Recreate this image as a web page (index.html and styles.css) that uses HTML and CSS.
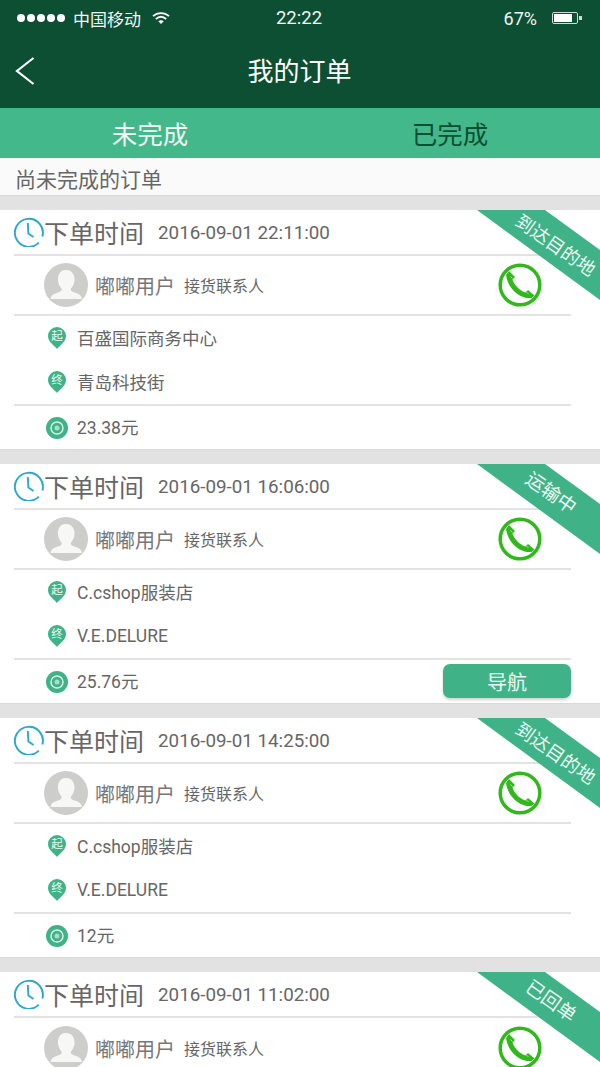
FILE: index.html
```html
<!DOCTYPE html>
<html lang="zh">
<head>
<meta charset="utf-8">
<title>我的订单</title>
<link rel="stylesheet" href="styles.css">
</head>
<body>
<svg class="defs" width="0" height="0" aria-hidden="true">
  <symbol id="clock" viewBox="0 0 30 30"><path d="M24.800 25.700A14 14 0 1 1 28.400 19.500" fill="none" stroke="#2ba8cc" stroke-width="1.900"/><path d="M13.800 6 14.400 16.500 19.500 20" fill="none" stroke="#2ba8cc" stroke-width="1.900"/></symbol>
  <symbol id="person" viewBox="0 0 44 44"><circle cx="22" cy="22" r="22" fill="#cdcdcb"/><path d="M22 7c6 0 9 5 8.500 10.500-.3 3.500-1.800 6-3.500 8-1 1.500.5 3 3.500 4 4 1.300 7 2.500 7.500 6.500H6.500c.5-4 3.500-5.200 7.500-6.500 3-1 4.500-2.500 3.500-4-1.700-2-3.200-4.500-3.500-8C13.500 12 16 7 22 7Z" fill="#f7f7f5"/></symbol>
  <symbol id="phone" viewBox="0 0 44 44"><circle cx="22" cy="22" r="19.800" fill="#fff" stroke="#31b81c" stroke-width="3.500"/><path d="M11 8l6 6-2.500 2.500c1 3 2.500 5.500 5 8s5 4 8 5l2.500-2.500 6.500 5.500-3 2.500C22 36 10 26 8 12Z" fill="#31b81c"/><path d="M12.500 13.500l2 2M28.500 29l2 2" stroke="#a8e29e" stroke-width="1"/></symbol>
  <symbol id="coin" viewBox="0 0 22 22"><circle cx="11" cy="11" r="11" fill="#3fb387"/><circle cx="11" cy="11" r="6" fill="none" stroke="#d8f2e6" stroke-width="1.500"/><circle cx="11" cy="11" r="2.500" fill="#a9dfc6"/></symbol>
</svg>
<div class="screen">
  <header class="top">
    <div class="status">
      <div class="carrier">
        <span class="dots"><i></i><i></i><i></i><i></i><i></i></span>
        <span>中国移动</span>
        <svg class="wifi" width="18" height="14" viewBox="0 0 18 14"><path d="M1 5.200C5.500 1 12.500 1 17 5.200M3.800 8C7 5.200 11 5.200 14.200 8" fill="none" stroke="#fff" stroke-width="1.800"/><path d="M6.300 10.300 9 13l2.700-2.700C10 9 8 9 6.300 10.300Z" fill="#fff"/></svg>
      </div>
      <div class="clock-text">22:22</div>
      <div class="power">
        <span>67%</span>
        <span class="battery"><span class="charge"></span></span>
      </div>
    </div>
    <div class="nav">
      <svg class="back" width="20" height="28" viewBox="0 0 20 28"><path d="M18.500 1 2 14l16.500 13" fill="none" stroke="#fff" stroke-width="2.200"/></svg>
      <h1>我的订单</h1>
    </div>
  </header>
  <div class="tabs">
    <div class="tab active">未完成</div>
    <div class="tab">已完成</div>
  </div>
  <div class="sub">尚未完成的订单</div>

  <section class="card">
    <div class="ribbon"><span>到达目的地</span></div>
    <div class="row time"><svg class="i-clock"><use href="#clock"/></svg><span class="tlabel">下单时间</span><span class="tvalue">2016-09-01 22:11:00</span></div>
    <div class="row user"><svg class="i-person"><use href="#person"/></svg><span class="name">嘟嘟用户</span><span class="role">接货联系人</span><svg class="i-phone"><use href="#phone"/></svg></div>
    <div class="row route">
      <div class="place"><svg class="pin" viewBox="0 0 18 22"><path d="M9 22C6 18 0 15 0 9a9 9 0 0 1 18 0c0 6-6 9-9 13Z" fill="#3fb387"/><text x="9" y="13" text-anchor="middle">起</text></svg><span>百盛国际商务中心</span></div>
      <div class="place"><svg class="pin" viewBox="0 0 18 22"><path d="M9 22C6 18 0 15 0 9a9 9 0 0 1 18 0c0 6-6 9-9 13Z" fill="#3fb387"/><text x="9" y="13" text-anchor="middle">终</text></svg><span>青岛科技街</span></div>
    </div>
    <div class="row price"><svg class="i-coin"><use href="#coin"/></svg><span class="amount">23.38元</span></div>
  </section>

  <section class="card">
    <div class="ribbon short"><span>运输中</span></div>
    <div class="row time"><svg class="i-clock"><use href="#clock"/></svg><span class="tlabel">下单时间</span><span class="tvalue">2016-09-01 16:06:00</span></div>
    <div class="row user"><svg class="i-person"><use href="#person"/></svg><span class="name">嘟嘟用户</span><span class="role">接货联系人</span><svg class="i-phone"><use href="#phone"/></svg></div>
    <div class="row route">
      <div class="place"><svg class="pin" viewBox="0 0 18 22"><path d="M9 22C6 18 0 15 0 9a9 9 0 0 1 18 0c0 6-6 9-9 13Z" fill="#3fb387"/><text x="9" y="13" text-anchor="middle">起</text></svg><span>C.cshop服装店</span></div>
      <div class="place"><svg class="pin" viewBox="0 0 18 22"><path d="M9 22C6 18 0 15 0 9a9 9 0 0 1 18 0c0 6-6 9-9 13Z" fill="#3fb387"/><text x="9" y="13" text-anchor="middle">终</text></svg><span>V.E.DELURE</span></div>
    </div>
    <div class="row price"><svg class="i-coin"><use href="#coin"/></svg><span class="amount">25.76元</span><button class="go">导航</button></div>
  </section>

  <section class="card">
    <div class="ribbon"><span>到达目的地</span></div>
    <div class="row time"><svg class="i-clock"><use href="#clock"/></svg><span class="tlabel">下单时间</span><span class="tvalue">2016-09-01 14:25:00</span></div>
    <div class="row user"><svg class="i-person"><use href="#person"/></svg><span class="name">嘟嘟用户</span><span class="role">接货联系人</span><svg class="i-phone"><use href="#phone"/></svg></div>
    <div class="row route">
      <div class="place"><svg class="pin" viewBox="0 0 18 22"><path d="M9 22C6 18 0 15 0 9a9 9 0 0 1 18 0c0 6-6 9-9 13Z" fill="#3fb387"/><text x="9" y="13" text-anchor="middle">起</text></svg><span>C.cshop服装店</span></div>
      <div class="place"><svg class="pin" viewBox="0 0 18 22"><path d="M9 22C6 18 0 15 0 9a9 9 0 0 1 18 0c0 6-6 9-9 13Z" fill="#3fb387"/><text x="9" y="13" text-anchor="middle">终</text></svg><span>V.E.DELURE</span></div>
    </div>
    <div class="row price"><svg class="i-coin"><use href="#coin"/></svg><span class="amount">12元</span></div>
  </section>

  <section class="card">
    <div class="ribbon short"><span>已回单</span></div>
    <div class="row time"><svg class="i-clock"><use href="#clock"/></svg><span class="tlabel">下单时间</span><span class="tvalue">2016-09-01 11:02:00</span></div>
    <div class="row user"><svg class="i-person"><use href="#person"/></svg><span class="name">嘟嘟用户</span><span class="role">接货联系人</span><svg class="i-phone"><use href="#phone"/></svg></div>
  </section>
</div>
</body>
</html>
```

FILE: styles.css
```css
* { box-sizing: border-box; }
html, body { margin: 0; padding: 0; }
body {
  width: 600px;
  height: 1067px;
  overflow: hidden;
  background: #e2e2e2;
  font-family: Roboto, "Noto Sans CJK SC", sans-serif;
  color: #666;
}
.defs { position: absolute; }
.screen { display: flex; flex-direction: column; height: 1067px; overflow: hidden; }

.top { height: 108px; flex: none; background: #0c4f32; color: #fff; }
.status {
  height: 36px;
  padding: 0 22px 0 17px;
  display: grid;
  grid-template-columns: 1fr auto 1fr;
  align-items: center;
  font-size: 17px;
  color: #f2f7f4;
}
.carrier { display: flex; align-items: center; gap: 8px; }
.dots { display: flex; gap: 2px; }
.dots i { width: 8px; height: 8px; border-radius: 50%; background: #fff; }
.wifi { margin-left: 3px; }
.clock-text { font-size: 18.500px; margin-left: 3px; }
.power { display: flex; align-items: center; justify-content: flex-end; gap: 15px; font-size: 18px; }
.battery {
  position: relative;
  width: 26px;
  height: 12px;
  border: 1px solid #cfdcd5;
  border-radius: 2px;
  padding: 1px;
  display: flex;
}
.battery::after {
  content: "";
  position: absolute;
  right: -5px;
  top: 3px;
  width: 3px;
  height: 4px;
  background: #cfdcd5;
}
.charge { width: 18px; background: #fff; }
.nav {
  height: 72px;
  position: relative;
  display: flex;
  align-items: center;
  justify-content: center;
}
.nav h1 { margin: 0 0 0 -1px; font-size: 26px; font-weight: 400; line-height: 1; color: #fff; }
.back { position: absolute; left: 15px; top: 21px; }

.tabs { height: 50px; flex: none; background: #43b88a; display: flex; }
.tab { flex: 1; display: flex; align-items: center; justify-content: center; padding-bottom: 2px; font-size: 25.500px; color: #0c4f32; }
.tab.active { color: #f2fbf6; }

.sub {
  height: 38px;
  flex: none;
  background: #fafafa;
  border-bottom: 1px solid #d9d9d9;
  padding: 3px 0 0 15px;
  display: flex;
  align-items: center;
  font-size: 21px;
  color: #666;
}

.card {
  position: relative;
  flex: none;
  overflow: hidden;
  background: #fff;
  margin-top: 14px;
  height: 240px;
  padding: 0 29px 0 14px;
  border-bottom: 1px solid #d9d9d9;
}
.row { display: flex; align-items: center; border-bottom: 2px solid #e2e2e2; }
.row:last-child { border-bottom: 0; }

.time { height: 46px; }
.i-clock { width: 30px; height: 30px; flex: none; }
.tlabel { font-size: 25px; color: #666; margin-right: 14px; }
.tvalue { font-size: 18.800px; color: #666; margin-top: 2px; }

.user { height: 60px; padding-left: 30px; }
.i-person { width: 44px; height: 44px; flex: none; margin-right: 7px; }
.name { font-size: 20px; color: #777; margin-right: 9px; }
.role { font-size: 16px; color: #666; }
.i-phone { width: 44px; height: 44px; margin-left: auto; margin-right: 29px; flex: none; }

.route { height: 90px; padding-left: 34px; flex-direction: column; align-items: flex-start; gap: 1px; }
.place { height: 43px; display: flex; align-items: center; font-size: 17.500px; color: #666; }
.pin { width: 18px; height: 22px; flex: none; margin-right: 11px; }
.pin text { font-size: 11.500px; fill: #eafaf2; font-family: "Noto Sans CJK SC", sans-serif; }

.price { height: 44px; padding: 0 0 2px 32px; font-size: 17.500px; color: #666; }
.i-coin { width: 22px; height: 22px; flex: none; margin: 2px 9px 0 0; }
.amount { margin-bottom: 2px; }
.go {
  margin-left: auto;
  width: 128px;
  height: 34px;
  border: 0;
  border-radius: 7px;
  background: #3fb387;
  color: #eefaf4;
  font: 400 20px "Noto Sans CJK SC", sans-serif;
  box-shadow: 0 2px 3px rgba(0, 0, 0, .18);
}

.ribbon {
  position: absolute;
  top: 0;
  right: 0;
  width: 123px;
  height: 90px;
  color: #eefaf4;
  font-size: 18.500px;
}
.ribbon::before {
  content: "";
  position: absolute;
  inset: 0;
  background: #3fb387;
  clip-path: polygon(0 0, 68px 0, 123px 40px, 123px 90px);
}
.ribbon span {
  position: absolute;
  left: 78px;
  top: 36px;
  white-space: nowrap;
  line-height: 1;
  transform: translate(-50%, -50%) rotate(35deg);
}
.ribbon.short span { left: 74px; top: 29px; font-size: 19px; }
```
